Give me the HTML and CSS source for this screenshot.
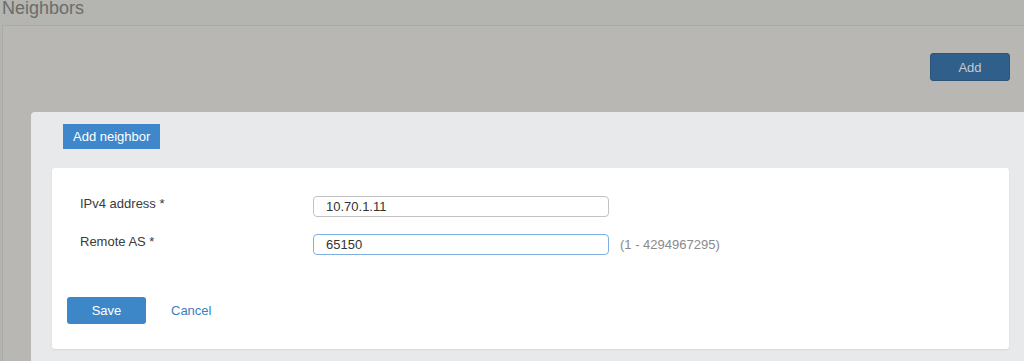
FILE: index.html
```html
<!DOCTYPE html>
<html lang="en">
  <head>
    <meta charset="UTF-8" />
    <meta name="viewport" content="width=device-width, initial-scale=1.0" />
    <title>Neighbors</title>
    <link rel="stylesheet" href="styles.css">
  </head>
  <body>
    <h1 class="page-title">Neighbors</h1>

    <!-- Neighbors list panel (dimmed behind the dialog) -->
    <div class="panel">
      <div class="toolbar">
        <button type="button" class="btn btn-dim">Add</button>
      </div>
    </div>

    <!-- Add neighbor dialog -->
    <div class="dialog">
      <div class="dialog-tab">Add neighbor</div>
      <form class="card" action="#">
        <div class="row">
          <label for="ipv4" class="label">IPv4 address *</label>
          <input type="text" id="ipv4" class="field" value="10.70.1.11" />
        </div>
        <div class="row">
          <label for="remote_as" class="label">Remote AS *</label>
          <input type="text" id="remote_as" class="field field-focus" value="65150" />
          <span class="hint">(1 - 4294967295)</span>
        </div>
        <div class="actions">
          <button type="button" class="btn">Save</button>
          <a href="#" class="link">Cancel</a>
        </div>
      </form>
    </div>
  </body>
</html>
```

FILE: styles.css
```css
body {
  font-family: "Liberation Sans", Arial, sans-serif;
  margin: 0;
  padding: 0;
  height: 361px;
  overflow: hidden;
  background-color: #b4b4b0;
  position: relative;
}
.page-title {
  margin: -3px 0 0 2px;
  height: 28px;
  font-size: 18px;
  font-weight: normal;
  color: #6b6d6a;
  line-height: 22px;
}
.panel {
  margin-left: 2px;
  height: 336px;
  background-color: #b8b7b4;
  border-top: 1px solid #a9a9a6;
  border-left: 1px solid #a9a9a6;
}
.toolbar {
  display: flex;
  justify-content: flex-end;
  padding: 27px 14px 0 0;
}
.btn {
  font-family: inherit;
  width: 79px;
  height: 27px;
  border: none;
  border-radius: 3px;
  background-color: #3d87c9;
  color: #fff;
  font-size: 13px;
  cursor: pointer;
}
.btn-dim {
  width: 80px;
  height: 28px;
  background-color: #2f5f8a;
  color: #c4cad0;
  border: 1px solid #2a5478;
}
.dialog {
  position: absolute;
  top: 112px;
  left: 31px;
  width: 999px;
  height: 260px;
  padding: 12px 0 0 0;
  box-sizing: border-box;
  background-color: #e8e9ea;
  border-top-left-radius: 4px;
}
.dialog-tab {
  display: inline-block;
  margin-left: 32px;
  height: 25px;
  line-height: 25px;
  padding: 0 10px;
  background-color: #3d87ca;
  color: #fff;
  font-size: 13px;
}
.card {
  margin: 19px 21px 0 21px;
  height: 181px;
  padding: 28px 0 0 0;
  box-sizing: border-box;
  background-color: #fff;
  border-radius: 3px;
  box-shadow: 0 1px 2px rgba(0, 0, 0, 0.08);
}
.row {
  display: flex;
  align-items: center;
  margin-bottom: 17px;
  padding-left: 28px;
}
.label {
  width: 233px;
  font-size: 13px;
  color: #3a3a3a;
  align-self: flex-start;
  line-height: 15px;
}
.field {
  font-family: inherit;
  width: 296px;
  height: 21px;
  box-sizing: border-box;
  padding: 0 12px;
  border: 1px solid #c2c2c2;
  border-radius: 4px;
  font-size: 13px;
  color: #333;
}
.field-focus {
  border-color: #7fafe0;
  outline: none;
}
.hint {
  margin-left: 11px;
  font-size: 13px;
  color: #8a8a8a;
}
.actions {
  display: flex;
  align-items: center;
  padding: 25px 0 0 15px;
}
.link {
  margin-left: 25px;
  font-size: 13px;
  color: #3b7fc2;
  text-decoration: none;
}
```
